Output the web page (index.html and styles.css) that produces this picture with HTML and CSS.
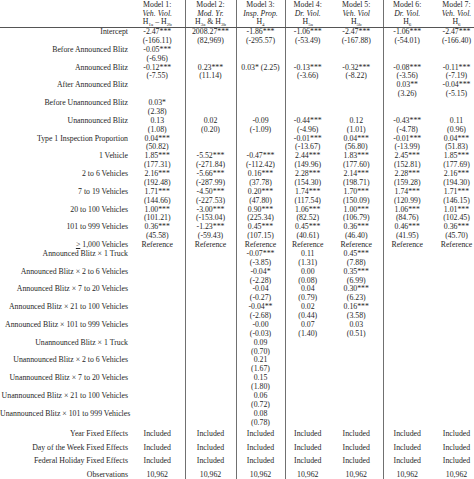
FILE: index.html
```
<!DOCTYPE html>
<html lang="en">
<head>
<meta charset="utf-8">
<title>Regression results</title>
<link rel="stylesheet" href="styles.css">
</head>
<body>
<table class="tbl">
<colgroup>
<col class="c-lab"><col class="c-m1"><col class="c-m2"><col class="c-m3"><col class="c-m4"><col class="c-m5"><col class="c-m6"><col class="c-m7">
</colgroup>
<thead>
<tr class="head">
<th class="lab"></th>
<th>Model 1:<br><i>Veh. Viol.</i><br>H<sub>1a</sub> – H<sub>2b</sub></th>
<th>Model 2:<br><i>Mod. Yr.</i><br>H<sub>3a</sub> &amp; H<sub>3b</sub></th>
<th>Model 3:<br><i>Insp. Prop.</i><br>H<sub>4</sub></th>
<th>Model 4:<br><i>Dr. Viol.</i><br>H<sub>5a</sub></th>
<th>Model 5:<br><i>Veh. Viol</i><br>H<sub>5b</sub></th>
<th>Model 6:<br><i>Dr. Viol.</i><br>H<sub>6</sub></th>
<th>Model 7:<br><i>Veh. Viol.</i><br>H<sub>6</sub></th>
</tr>
</thead>
<tbody>
<tr class="var"><td class="lab">Intercept</td><td>-2.47***<br>(-166.11)</td><td>2008.27***<br>(82,969)</td><td>-1.86***<br>(-295.57)</td><td>-1.06***<br>(-53.49)</td><td>-2.47***<br>(-167.88)</td><td>-1.06***<br>(-54.01)</td><td>-2.47***<br>(-166.40)</td></tr>
<tr class="var"><td class="lab">Before Announced Blitz</td><td>-0.05***<br>(-6.96)</td><td></td><td></td><td></td><td></td><td></td><td></td></tr>
<tr class="var"><td class="lab">Announced Blitz</td><td>-0.12***<br>(-7.55)</td><td>0.23***<br>(11.14)</td><td>0.03* (2.25)</td><td>-0.13***<br>(-3.66)</td><td>-0.32***<br>(-8.22)</td><td>-0.08***<br>(-3.56)</td><td>-0.11***<br>(-7.19)</td></tr>
<tr class="var"><td class="lab">After Announced Blitz</td><td></td><td></td><td></td><td></td><td></td><td>0.03**<br>(3.26)</td><td>-0.04***<br>(-5.15)</td></tr>
<tr class="var"><td class="lab">Before Unannounced Blitz</td><td>0.03*<br>(2.38)</td><td></td><td></td><td></td><td></td><td></td><td></td></tr>
<tr class="var"><td class="lab">Unannounced Blitz</td><td>0.13<br>(1.08)</td><td>0.02<br>(0.20)</td><td>-0.09<br>(-1.09)</td><td>-0.44***<br>(-4.96)</td><td>0.12<br>(1.01)</td><td>-0.43***<br>(-4.78)</td><td>0.11<br>(0.96)</td></tr>
<tr class="var"><td class="lab">Type 1 Inspection Proportion</td><td>0.04***<br>(50.82)</td><td></td><td></td><td>-0.01***<br>(-13.67)</td><td>0.04***<br>(56.80)</td><td>-0.01***<br>(-13.99)</td><td>0.04***<br>(51.83)</td></tr>
<tr class="var"><td class="lab">1 Vehicle</td><td>1.85***<br>(177.31)</td><td>-5.52***<br>(-271.84)</td><td>-0.47***<br>(-112.42)</td><td>2.44***<br>(149.96)</td><td>1.83***<br>(177.60)</td><td>2.45***<br>(152.81)</td><td>1.85***<br>(177.69)</td></tr>
<tr class="var"><td class="lab">2 to 6 Vehicles</td><td>2.16***<br>(192.48)</td><td>-5.66***<br>(-287.99)</td><td>0.16***<br>(37.78)</td><td>2.28***<br>(154.30)</td><td>2.14***<br>(198.71)</td><td>2.28***<br>(159.28)</td><td>2.16***<br>(194.30)</td></tr>
<tr class="var"><td class="lab">7 to 19 Vehicles</td><td>1.71***<br>(144.66)</td><td>-4.50***<br>(-227.53)</td><td>0.20***<br>(47.80)</td><td>1.74***<br>(117.54)</td><td>1.70***<br>(150.09)</td><td>1.74***<br>(120.99)</td><td>1.71***<br>(146.15)</td></tr>
<tr class="var"><td class="lab">20 to 100 Vehicles</td><td>1.00***<br>(101.21)</td><td>-3.00***<br>(-153.04)</td><td>0.90***<br>(225.34)</td><td>1.06***<br>(82.52)</td><td>1.00***<br>(106.79)</td><td>1.06***<br>(84.76)</td><td>1.01***<br>(102.45)</td></tr>
<tr class="var"><td class="lab">101 to 999 Vehicles</td><td>0.36***<br>(45.58)</td><td>-1.23***<br>(-59.43)</td><td>0.45***<br>(107.15)</td><td>0.45***<br>(40.61)</td><td>0.36***<br>(46.40)</td><td>0.46***<br>(41.95)</td><td>0.36***<br>(45.70)</td></tr>
<tr class="one"><td class="lab"><u>&gt;</u> 1,000 Vehicles</td><td>Reference</td><td>Reference</td><td>Reference</td><td>Reference</td><td>Reference</td><td>Reference</td><td>Reference</td></tr>
<tr class="var"><td class="lab">Announced Blitz × 1 Truck</td><td></td><td></td><td>-0.07***<br>(-3.85)</td><td>0.11<br>(1.31)</td><td>0.45***<br>(7.88)</td><td></td><td></td></tr>
<tr class="var"><td class="lab">Announced Blitz × 2 to 6 Vehicles</td><td></td><td></td><td>-0.04*<br>(-2.28)</td><td>0.00<br>(0.08)</td><td>0.35***<br>(6.99)</td><td></td><td></td></tr>
<tr class="var"><td class="lab">Announced Blitz × 7 to 20 Vehicles</td><td></td><td></td><td>-0.04<br>(-0.27)</td><td>0.04<br>(0.79)</td><td>0.30***<br>(6.23)</td><td></td><td></td></tr>
<tr class="var"><td class="lab">Announced Blitz × 21 to 100 Vehicles</td><td></td><td></td><td>-0.04**<br>(-2.68)</td><td>0.02<br>(0.44)</td><td>0.16***<br>(3.58)</td><td></td><td></td></tr>
<tr class="var"><td class="lab">Announced Blitz × 101 to 999 Vehicles</td><td></td><td></td><td>-0.00<br>(-0.03)</td><td>0.07<br>(1.40)</td><td>0.03<br>(0.51)</td><td></td><td></td></tr>
<tr class="var"><td class="lab">Unannounced Blitz × 1 Truck</td><td></td><td></td><td>0.09<br>(0.70)</td><td></td><td></td><td></td><td></td></tr>
<tr class="var"><td class="lab">Unannounced Blitz × 2 to 6 Vehicles</td><td></td><td></td><td>0.21<br>(1.67)</td><td></td><td></td><td></td><td></td></tr>
<tr class="var"><td class="lab">Unannounced Blitz × 7 to 20 Vehicles</td><td></td><td></td><td>0.15<br>(1.80)</td><td></td><td></td><td></td><td></td></tr>
<tr class="var"><td class="lab">Unannounced Blitz × 21 to 100 Vehicles</td><td></td><td></td><td>0.06<br>(0.72)</td><td></td><td></td><td></td><td></td></tr>
<tr class="var"><td class="lab">Unannounced Blitz × 101 to 999 Vehicles</td><td></td><td></td><td>0.08<br>(0.78)</td><td></td><td></td><td></td><td></td></tr>
<tr class="fx"><td class="lab">Year Fixed Effects</td><td>Included</td><td>Included</td><td>Included</td><td>Included</td><td>Included</td><td>Included</td><td>Included</td></tr>
<tr class="fx"><td class="lab">Day of the Week Fixed Effects</td><td>Included</td><td>Included</td><td>Included</td><td>Included</td><td>Included</td><td>Included</td><td>Included</td></tr>
<tr class="fx"><td class="lab">Federal Holiday Fixed Effects</td><td>Included</td><td>Included</td><td>Included</td><td>Included</td><td>Included</td><td>Included</td><td>Included</td></tr>
<tr class="fx"><td class="lab">Observations</td><td>10,962</td><td>10,962</td><td>10,962</td><td>10,962</td><td>10,962</td><td>10,962</td><td>10,962</td></tr>
</tbody>
</table>
</body>
</html>
```
FILE: styles.css
```
html, body {
  margin: 0;
  padding: 0;
  background: #ffffff;
}

body {
  width: 474px;
  height: 479px;
  overflow: hidden;
  font-family: "Liberation Serif", "Times New Roman", serif;
  font-size: 7.8px;
  color: #262626;
}

.tbl {
  border-collapse: collapse;
  table-layout: fixed;
  width: 482px;
}

.c-lab { width: 130px; }
.c-m1 { width: 55px; }
.c-m2 { width: 51px; }
.c-m3 { width: 49px; }
.c-m4 { width: 45px; }
.c-m5 { width: 53px; }
.c-m6 { width: 48px; }
.c-m7 { width: 51px; }

.tbl td,
.tbl th {
  padding: 0;
  text-align: center;
  vertical-align: top;
  white-space: nowrap;
  font-weight: normal;
  line-height: 8.88px;
}

.tbl .lab {
  text-align: right;
  padding-right: 2px;
}

.tbl td:nth-child(3),
.tbl td:nth-child(4),
.tbl td:nth-child(5),
.tbl td:nth-child(7),
.tbl th:nth-child(3),
.tbl th:nth-child(4),
.tbl th:nth-child(5),
.tbl th:nth-child(7) {
  border-left: 1px solid #707070;
}

.head th {
  line-height: 8.5px;
  height: 26px;
  padding-top: 1px;
  border-bottom: 1px solid #555555;
}

.tbl sub {
  font-size: 5px;
  line-height: 0;
  vertical-align: -1.5px;
}

.var td {
  height: 17.76px;
}

.one td {
  height: 8.88px;
}

.fx td {
  height: 13.5px;
  line-height: 13.5px;
  vertical-align: middle;
}
```
